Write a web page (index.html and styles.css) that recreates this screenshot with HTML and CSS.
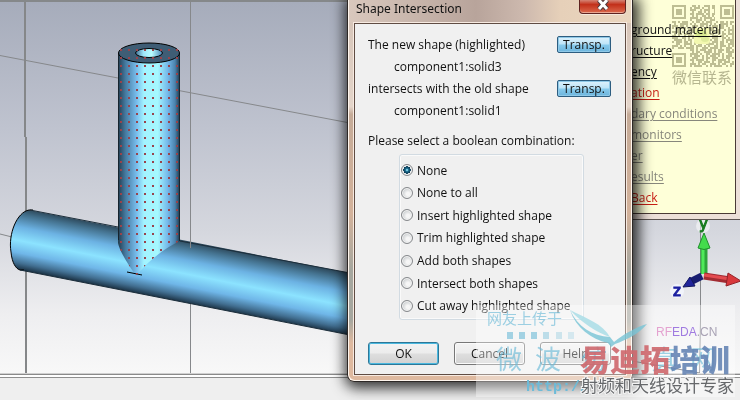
FILE: index.html
```html
<!DOCTYPE html>
<html lang="en">
<head>
  <meta charset="UTF-8" />
  <title>Shape Intersection</title>
  <link rel="stylesheet" href="styles.css">
</head>
<body>
  <main class="desktop">
    <div class="view">
      <svg class="scene" viewBox="0 0 740 371" preserveAspectRatio="xMinYMin slice" aria-hidden="true">
        <defs>
          <linearGradient id="upright">
            <stop offset="0" stop-color="#223c4e" />
            <stop offset=".12" stop-color="#45799f" />
            <stop offset=".3" stop-color="#78bdec" />
            <stop offset=".42" stop-color="#a2f3ff" />
            <stop offset=".64" stop-color="#a5f8ff" />
            <stop offset=".8" stop-color="#75b9ea" />
            <stop offset=".92" stop-color="#4b83ad" />
            <stop offset="1" stop-color="#1d3343" />
          </linearGradient>
          <linearGradient id="lying" gradientUnits="userSpaceOnUse" x1="30" y1="207" x2="18" y2="267">
            <stop offset="0" stop-color="#2b4557" />
            <stop offset=".12" stop-color="#44728f" />
            <stop offset=".32" stop-color="#6cb2e3" />
            <stop offset=".54" stop-color="#8ce3ff" />
            <stop offset=".74" stop-color="#6fb6e8" />
            <stop offset=".9" stop-color="#426f91" />
            <stop offset="1" stop-color="#1d3548" />
          </linearGradient>
          <linearGradient id="bore">
            <stop offset="0" stop-color="#3f6e92" />
            <stop offset=".3" stop-color="#9fe6fa" />
            <stop offset=".6" stop-color="#b8fdff" />
            <stop offset="1" stop-color="#4983b4" />
          </linearGradient>
          <pattern id="dots" y="7" width="8" height="8" patternUnits="userSpaceOnUse">
            <rect width="2" height="2" fill="#99434c" />
          </pattern>
        </defs>

        <!-- bounding box -->
        <path d="M25 0V135M26 135V371" stroke="#858789" stroke-width="2" />
        <path d="M190.500 0V371M0 53.500L118 76M176 88L350 121M0 232L12 235M700.500 214V318L699.500 371" fill="none" stroke="#86888b" />
        <path d="M632 359L700 371" stroke="#55585b" />

        <!-- lying cylinder -->
        <path d="M29 208C17 210 8 232 11 250C12 261 16 267 20 268L350 333V271Z" fill="url(#lying)" />
        <path d="M33 208L29 208C17 210 8 232 11 250C12 261 16 267 20 268H24" fill="none" stroke="#000" />
        <path d="M30 208L118 225M180 239L350 271M20 268L350 333" stroke="#1c2e3b" />

        <!-- upright cylinder -->
        <path d="M118 51V241C120 250 128 262 136 274C145 262 164 246 180 239V51Z" fill="url(#upright)" />
        <path d="M118.500 51V238M179.500 51V239" stroke="#16242e" />
        <path d="M127 270L142 273" stroke="#000" />
        <path d="M190.500 238V246" stroke="#86888b" />
        <ellipse cx="149" cy="51" rx="30.500" ry="10" fill="#3f5d75" stroke="#000" />
        <ellipse cx="149" cy="51" rx="13.500" ry="4.500" fill="url(#bore)" stroke="#000" />
        <path d="M118 46H180V239C164 246 145 262 136 274C128 262 120 250 118 241Z" fill="url(#dots)" />

        <!-- axes -->
        <circle cx="703" cy="224" r="7" fill="#fff" opacity=".5" />
        <circle cx="677" cy="289" r="7" fill="#f4f6ff" opacity=".8" />
        <path d="M704 272V245" stroke="#2ea53a" stroke-width="7" />
        <path d="M703 272V245" stroke="#4fea5a" stroke-width="3" />
        <path d="M704 231L710 246Q704 249 698 246Z" fill="#43dc4c" stroke="#218f2d" />
        <path d="M704 274L730 278" stroke="#a22b32" stroke-width="7" />
        <path d="M704 273L730 277" stroke="#e34b50" stroke-width="3" />
        <path d="M728 271L741 279L726 284Z" fill="#d9383c" stroke="#932329" />
        <path d="M702 274L690 280" stroke="#181d70" stroke-width="7" />
        <path d="M683 285L690 275L695 284Z" fill="#20249b" stroke="#13175e" />
        <text class="axis axis-y" x="699" y="227">y</text>
        <text class="axis axis-z" x="673" y="294">z</text>
      </svg>
    </div>
    <div class="status-bar"></div>

    <nav class="tutorial">
      <ul class="steps">
        <li><a href="#material">ground material</a></li>
        <li><a href="#structure">ructure</a></li>
        <li><a href="#frequency">ency</a></li>
        <li><a class="hot" href="#excitation">ation</a></li>
        <li><a class="off" href="#conditions">dary conditions</a></li>
        <li><a class="off" href="#monitors">monitors</a></li>
        <li><a class="off" href="#solver">er</a></li>
        <li><a class="off" href="#results">esults</a></li>
        <li><a class="hot" href="#back">Back</a></li>
      </ul>
    </nav>

    <form class="dialog">
      <header class="title-bar">
        <h1>Shape Intersection</h1>
        <button class="close" type="button" aria-label="Close">
          <svg viewBox="0 0 12 12" width="12" height="12"><path d="M2 1L10 10M10 1L2 10" stroke="#4e3a3c" stroke-width="5" /><path d="M2 1L10 10M10 1L2 10" stroke="#fff" stroke-width="3" /></svg>
        </button>
      </header>
      <div class="dialog-body">
        <div class="shapes">
          <p>The new shape (highlighted)</p>
          <button class="transp" type="button">Transp.</button>
          <p class="name">component1:solid3</p>
          <p>intersects with the old shape</p>
          <button class="transp" type="button">Transp.</button>
          <p class="name">component1:solid1</p>
        </div>
        <fieldset>
          <legend>Please select a boolean combination:</legend>
          <div class="options">
            <label><input type="radio" name="op" checked />None</label>
            <label><input type="radio" name="op" />None to all</label>
            <label><input type="radio" name="op" />Insert highlighted shape</label>
            <label><input type="radio" name="op" />Trim highlighted shape</label>
            <label><input type="radio" name="op" />Add both shapes</label>
            <label><input type="radio" name="op" />Intersect both shapes</label>
            <label><input type="radio" name="op" />Cut away highlighted shape</label>
          </div>
        </fieldset>
        <div class="actions">
          <button class="default" type="submit">OK</button>
          <button type="button">Cancel</button>
          <button type="button">Help</button>
        </div>
      </div>
    </form>

    <!-- contact code -->
    <div class="contact">
      <svg viewBox="0 0 62 62" width="62" height="62" aria-hidden="true">
        <g fill="none" stroke="#b4b3a0" stroke-width="2">
          <path d="M20 1H43" stroke-dasharray="4 2 2 4 6 2" />
          <path d="M18 3H43" stroke-dasharray="2 2 6 2 2 4" />
          <path d="M18 5H43" stroke-dasharray="6 4 2 2" />
          <path d="M20 7H43" stroke-dasharray="2 4 4 2 2 2" />
          <path d="M18 9H43" stroke-dasharray="4 2 8 2" />
          <path d="M20 11H43" stroke-dasharray="2 2 2 4 4 2" />
          <path d="M18 13H43" stroke-dasharray="8 2 2 2" />
          <path d="M18 15H43" stroke-dasharray="2 4 6 2" />
          <path d="M0 17H62" stroke-dasharray="4 2 2 2 6 4 2 2" />
          <path d="M2 19H62" stroke-dasharray="2 4 8 2 2 2" />
          <path d="M0 21H62" stroke-dasharray="6 2 4 2 2 4" />
          <path d="M0 23H62" stroke-dasharray="2 2 10 2 2 2 4 4" />
          <path d="M4 25H62" stroke-dasharray="4 4 2 2 6 2" />
          <path d="M0 27H62" stroke-dasharray="8 2 2 4 2 2" />
          <path d="M2 29H62" stroke-dasharray="2 2 4 2 8 4" />
          <path d="M0 31H62" stroke-dasharray="4 2 2 4 2 2 6 2" />
          <path d="M0 33H62" stroke-dasharray="6 4 4 2 2 2" />
          <path d="M2 35H62" stroke-dasharray="8 2 2 2 4 4 2 2" />
          <path d="M0 37H62" stroke-dasharray="2 2 6 2 4 2" />
          <path d="M4 39H62" stroke-dasharray="4 4 8 2 2 2" />
          <path d="M0 41H62" stroke-dasharray="6 2 2 2 2 4 4 2" />
          <path d="M0 43H62" stroke-dasharray="2 4 6 2 8 2" />
          <path d="M18 45H62" stroke-dasharray="4 2 2 2 6 2" />
          <path d="M20 47H62" stroke-dasharray="2 2 4 4 8 2" />
          <path d="M18 49H62" stroke-dasharray="8 2 2 4 4 2" />
          <path d="M18 51H62" stroke-dasharray="2 2 6 2 2 2" />
          <path d="M20 53H62" stroke-dasharray="6 4 2 2 4 2" />
          <path d="M18 55H62" stroke-dasharray="4 2 8 2 2 4" />
          <path d="M20 57H62" stroke-dasharray="2 4 4 2 6 2" />
          <path d="M18 59H62" stroke-dasharray="6 2 2 2 4 4" />
          <path d="M18 61H62" stroke-dasharray="2 2 8 4 2 2" />
          <path d="M1 1H13V13H1ZM49 1H61V13H49ZM1 49H13V61H1Z" />
          <path d="M4 7H10M52 7H58M4 55H10" stroke-width="6" />
        </g>
        <rect x="22" y="23" width="16" height="16" rx="3" fill="#f3f7c8" />
        <ellipse cx="29" cy="29" rx="6" ry="4" fill="#d3e69c" />
        <ellipse cx="33" cy="34" rx="4" ry="3" fill="#dbe8ac" />
      </svg>
      <span>微信联系</span>
    </div>

    <!-- site stamp -->
    <svg class="stamp" viewBox="0 0 264 95" width="264" height="95">
      <rect width="259" height="92" fill="#fff" opacity=".38" />
      <g fill="#6dbbd8">
        <text class="kai small" x="11" y="19">网友上传于</text>
        <g opacity=".6">
          <rect x="31" y="27" width="6" height="7" />
          <rect x="43" y="27" width="6" height="7" />
          <rect x="55" y="27" width="6" height="7" />
          <rect x="67" y="27" width="6" height="7" opacity=".7" />
          <rect x="80" y="27" width="6" height="7" opacity=".5" />
          <rect x="92" y="27" width="6" height="7" opacity=".4" />
        </g>
        <text class="kai large" x="20" y="64">微</text>
        <text class="kai large" x="59" y="64">波</text>
        <text class="kai large" x="105" y="64">仿</text>
        <text class="kai large" x="175" y="64">真</text>
        <text class="kai large" x="214" y="64">网</text>
        <text class="url" x="50" y="86">http://</text>
      </g>
      <path d="M94 5C102 22 116 31 134 32L138 37C148 29 160 22 171 19C163 29 150 35 139 39L135 42L132 38C115 34 100 23 94 5Z" fill="#78c4d6" opacity=".8" />
      <path d="M94 5C110 13 127 19 134 32C122 28 106 18 94 5Z" fill="#a5dce6" opacity=".8" />
      <text class="domain" x="180" y="31"><tspan fill="#e4a3d0">RF</tspan><tspan fill="#a07be0">EDA</tspan><tspan fill="#a9a3b5">.CN</tspan></text>
      <text class="brand" x="104" y="66"><tspan fill="#cf686d">易迪拓</tspan><tspan fill="#6685b5">培训</tspan></text>
      <text class="slogan" x="105" y="87">射频和天线设计专家</text>
    </svg>
  </main>
</body>
</html>
```

FILE: styles.css
```css
* { box-sizing: border-box; }
body { margin: 0; font-family: "Open Sans", "Noto Sans CJK SC", sans-serif; font-size: 12px; color: #111; background: #efefef; }
h1, p, ul, fieldset, legend { margin: 0; padding: 0; border: none; font-size: 12px; font-weight: normal; }
ul { list-style: none; }
button { font-family: inherit; font-size: 12px; color: #111; padding: 0; }

.desktop { position: relative; display: flex; flex-direction: column; height: 100vh; overflow: hidden; }
.view { flex: 1; overflow: hidden; border-top: 2px solid #85888a; border-bottom: 1px solid #d0d0d0; background: linear-gradient(#a6acbb, #bfc3cf 34%, #d5d7de 62%, #eeeef0 84%, #f8f8f8); }
.scene { display: block; width: 100%; height: 100%; }
.axis { font-family: "DejaVu Sans", sans-serif; font-size: 15px; }
.axis-y { fill: #187b1e; stroke: #187b1e; }
.axis-z { fill: #1a1ea0; stroke: #1a1ea0; }
.status-bar { height: 26px; border-top: 1px solid #8a8a8a; background: linear-gradient(#fff 2px, #8f8f8f 2px, #8f8f8f 3px, #efefef 3px); }

/* tutorial window */
.tutorial { position: absolute; left: 626px; right: 0; top: 0; padding: 0 4px 5px 0; background: #ecdfd8; border-bottom: 1px solid #5b5351; }
.steps { padding: 19px 0 5px 5px; background: #feffd8; border-right: 1px solid #4a3a36; border-bottom: 1px solid #4a3a36; }
.steps li { height: 21px; line-height: 21px; white-space: nowrap; }
.steps a { color: #111; text-underline-offset: 2px; }
.steps .hot { color: #c81e14; }
.steps .off { color: #87877c; }

/* dialog */
.dialog { position: absolute; left: 347px; top: 0; width: 286px; padding: 0 6px 6px; border: 1px solid #2d2826; border-top: none; border-radius: 0 0 7px 7px; background: linear-gradient(#d3c1b5, #e4d5ca 28%, #c5ab98 30%, #d3b29b 56%, #a6a79f 71%, #a6a79f 84%, #deb99f 90%); box-shadow: inset 1px -1px #fff6ee, inset -1px 0 #fff6ee, 2px 2px 14px 4px rgba(0, 0, 0, .8); }
.title-bar { display: flex; justify-content: space-between; height: 23px; margin: 0 -5px; padding: 0 5px 0 7px; background: linear-gradient(90deg, #d9c8bd, #b8a49b 45%, #cdb9ae 62%, #e6d0b9 75%, #ead6bf); }
.title-bar h1 { font-family: "Noto Sans", sans-serif; line-height: 18px; }
.close { display: flex; justify-content: center; width: 47px; height: 14px; border: 1px solid #5e2320; border-top: none; border-radius: 0 0 4px 4px; background: linear-gradient(#d58474, #c2301a 35%, #dc6a4e); box-shadow: inset 0 -1px #eba590, 0 1px #f5e8dc; }
.close svg { margin-top: -1px; }
.dialog-body { padding: 9px 14px 9px 13px; border: 1px solid #5f4c43; background: #f0f0f0; box-shadow: 0 0 0 1px #f7eae1; }
.shapes { display: grid; grid-template-columns: 1fr 54px; grid-auto-rows: 22px; align-items: center; }
.shapes .name { grid-column: 1 / -1; padding-left: 26px; }
.transp { height: 17px; line-height: 15px; border: 1px solid #2d5d80; border-radius: 2px; background: linear-gradient(#dff2fc, #bce4f8 48%, #88cbed 52%, #6cb4dc); box-shadow: inset 0 0 0 1px #8fc9e8; }
fieldset { margin-top: 11px; }
legend { height: 22px; line-height: 18px; }
.options { display: grid; grid-template-rows: repeat(7, 1fr); height: 166px; margin: 0 27px 0 31px; padding: 4px 1px 2px; border: 1px solid #d2dbe2; border-radius: 3px; box-shadow: inset 0 0 0 1px #fafafa; }
.options label { display: flex; align-items: center; gap: 4px; white-space: nowrap; }
input[type="radio"] { appearance: none; width: 12px; height: 12px; margin: 0; border: 1px solid #85888b; border-radius: 50%; background: radial-gradient(circle at 60% 60%, #f6f6f6 20%, #c4c8ca 75%); box-shadow: inset 0 0 0 1px #f4f4f4; }
input[type="radio"]:checked { background: radial-gradient(circle, #7fd4ee 8%, #176586 24%, #0c3b56 50%, #e2e5e7 54%); }
.actions { display: flex; gap: 15px; margin-top: 22px; }
.actions button { flex: 1; height: 23px; border: 1px solid #777; border-radius: 3px; background: linear-gradient(#f3f3f3, #ececec 48%, #dedede 52%, #d2d2d2); box-shadow: inset 0 0 0 1px #fafafa; }
.actions .default { border-color: #2d7797; box-shadow: inset 0 0 0 1px #4ab8df; }

/* overlays */
.contact { position: absolute; right: 4px; top: 5px; width: 64px; overflow: hidden; mix-blend-mode: multiply; opacity: .85; }
.contact svg { display: block; }
.contact span { display: block; font-size: 15px; line-height: 20px; white-space: nowrap; color: #aaa99b; }
.stamp { position: absolute; right: 0; bottom: 0; font-family: "Noto Sans CJK SC", sans-serif; }
.kai { opacity: .65; }
.small { font-size: 15px; }
.large { font-size: 26px; }
.url { font-family: "Liberation Mono", monospace; font-size: 15px; font-weight: bold; }
.domain { font-family: "Liberation Sans", sans-serif; font-size: 12px; stroke-width: 0; }
.brand { font-size: 30px; font-weight: 900; opacity: .9; }
.slogan { font-size: 17px; fill: #66686b; paint-order: stroke; stroke: #f4f4f4; stroke-width: 2px; }
```
